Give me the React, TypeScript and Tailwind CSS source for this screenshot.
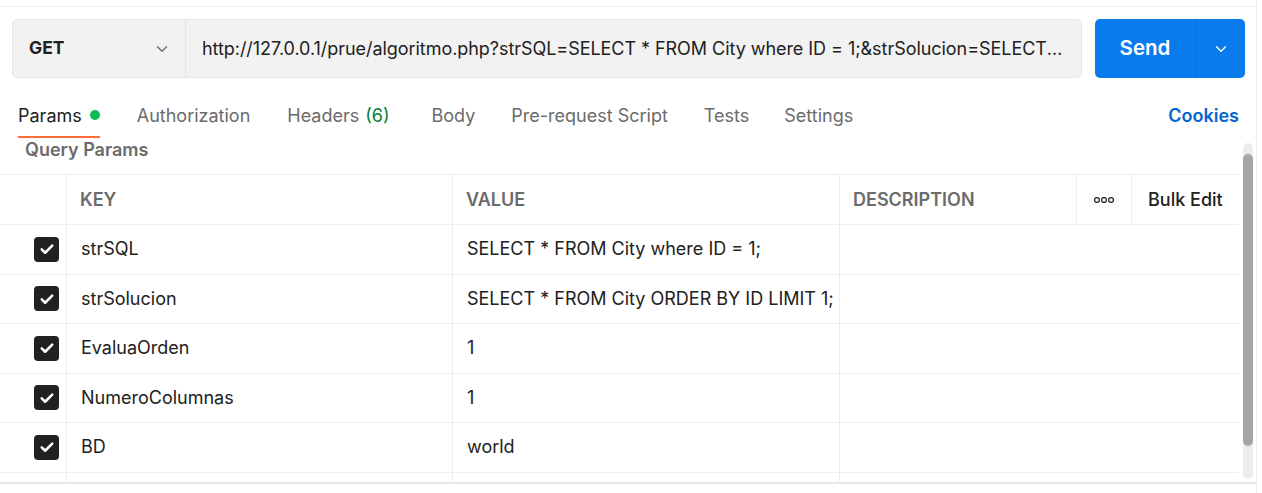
import React from "react";

const rows = [
  { k: "strSQL", v: "SELECT * FROM City where ID = 1;" },
  { k: "strSolucion", v: "SELECT * FROM City ORDER BY ID LIMIT 1;" },
  { k: "EvaluaOrden", v: "1" },
  { k: "NumeroColumnas", v: "1" },
  { k: "BD", v: "world" },
];

function Chevron({ color }: { color: string }) {
  return (
    <svg width="14" height="14" viewBox="0 0 14 14" fill="none">
      <path d="M2.5 4.75L7 9.25l4.5-4.5" stroke={color} strokeWidth="1.4" strokeLinecap="round" strokeLinejoin="round" />
    </svg>
  );
}

function Check() {
  return (
    <div className="w-[25px] h-[25px] rounded-[4px] bg-[#212121] flex items-center justify-center">
      <svg width="18" height="18" viewBox="0 0 24 24" fill="none">
        <path d="M5 12.5l4.5 4.5L19 7.5" stroke="white" strokeWidth="3.4" strokeLinecap="round" strokeLinejoin="round" />
      </svg>
    </div>
  );
}

export default function App() {
  return (
    <div className="w-[1262px] h-[493px] bg-white overflow-hidden text-[18px] text-[#212121]" style={{ fontFamily: "Inter, 'Noto Sans', sans-serif" }}>
      <div className="w-[1257px] h-full border-r border-[#ededed] flex flex-col">
        <div className="h-[7px] border-b border-[#ededed] shrink-0" />
        {/* URL row */}
        <div className="flex mt-[12px] pl-[12px] pr-[11px] h-[59px] shrink-0">
          <div className="flex flex-1 min-w-0 bg-[#f2f2f2] border border-[#e6e6e6] rounded-[5px]">
            <div className="w-[173px] shrink-0 border-r border-[#e3e3e3] flex items-center justify-between pl-[16px] pr-[16px]">
              <span className="font-bold text-[17.5px] text-[#212121]">GET</span>
              <Chevron color="#6b6b6b" />
            </div>
            <div className="flex-1 min-w-0 flex items-center pl-[16px] pr-[17px]">
              <span className="truncate tracking-[-0.05px]">http://127.0.0.1/prue/algoritmo.php?strSQL=SELECT * FROM City where ID = 1;&amp;strSolucion=SELECT * FROM City ORDER BY ID LIMIT 1;&amp;EvaluaOrden=1&amp;NumeroColumnas=1&amp;BD=world</span>
            </div>
          </div>
          <div className="ml-[13px] w-[150px] shrink-0 flex bg-[#097bed] rounded-[5px] text-white">
            <div className="w-[101px] flex items-center justify-center text-[20.5px] font-semibold border-r border-[#0a6fd6]">Send</div>
            <div className="flex-1 flex items-center justify-center">
              <Chevron color="white" />
            </div>
          </div>
        </div>
        {/* Tabs */}
        <div className="flex items-stretch h-[46px] mt-[14px] pl-[18px] pr-[17px] shrink-0">
          <div className="flex items-center border-b-2 border-[#ff6c37] pt-[2px]">
            <span>Params</span>
            <span className="ml-[8px] w-[10px] h-[10px] rounded-full bg-[#0cbb52]" />
          </div>
          <div className="flex items-center ml-[37px] text-[#6b6b6b]">Authorization</div>
          <div className="flex items-center ml-[37px] text-[#6b6b6b]">
            Headers <span className="ml-[6px] text-[#007f31]">(6)</span>
          </div>
          <div className="flex items-center ml-[42px] text-[#6b6b6b]">Body</div>
          <div className="flex items-center ml-[36px] text-[#6b6b6b]">Pre-request Script</div>
          <div className="flex items-center ml-[36px] text-[#6b6b6b]">Tests</div>
          <div className="flex items-center ml-[35px] text-[#6b6b6b]">Settings</div>
          <div className="flex items-center ml-auto text-[#0265d2] font-semibold">Cookies</div>
        </div>
        {/* Content */}
        <div className="flex h-[346px] border-b-2 border-[#e6e6e6] overflow-hidden shrink-0">
          <div className="w-[1239px] shrink-0">
            <div className="h-[36px] pl-[25px] leading-[24px] font-semibold text-[#6b6b6b]">Query Params</div>
            <div className="border-t border-[#ededed]">
              <div className="flex h-[50px] border-b border-[#ededed] font-semibold text-[#6b6b6b]">
                <div className="w-[67px] border-r border-[#ededed]" />
                <div className="w-[386px] border-r border-[#ededed] flex items-center pl-[13px]">KEY</div>
                <div className="w-[387px] border-r border-[#ededed] flex items-center pl-[13px]">VALUE</div>
                <div className="w-[237px] border-r border-[#ededed] flex items-center pl-[13px]">DESCRIPTION</div>
                <div className="w-[55px] border-r border-[#ededed] flex items-center justify-center">
                  <svg width="22" height="8" viewBox="0 0 22 8" fill="none">
                    <circle cx="4" cy="4" r="2.4" stroke="#212121" strokeWidth="1.2" />
                    <circle cx="11" cy="4" r="2.4" stroke="#212121" strokeWidth="1.2" />
                    <circle cx="18" cy="4" r="2.4" stroke="#212121" strokeWidth="1.2" />
                  </svg>
                </div>
                <div className="flex-1 flex items-center pl-[16px] text-[#212121] font-medium">Bulk Edit</div>
              </div>
              {rows.map((r) => (
                <div key={r.k} className="flex h-[49.5px] border-b border-[#ededed]">
                  <div className="w-[67px] border-r border-[#ededed] flex items-center pl-[34px]">
                    <Check />
                  </div>
                  <div className="w-[386px] border-r border-[#ededed] flex items-center pl-[14px] pb-[1px]">{r.k}</div>
                  <div className="w-[387px] border-r border-[#ededed] flex items-center pl-[14px] pb-[1px]">{r.v}</div>
                  <div className="flex-1" />
                </div>
              ))}
              <div className="flex h-[49.5px]">
                <div className="w-[67px] border-r border-[#ededed]" />
                <div className="w-[386px] border-r border-[#ededed]" />
                <div className="w-[387px] border-r border-[#ededed]" />
              </div>
            </div>
          </div>
          <div className="ml-[4px] w-[10px] mt-[5px] h-[336px] rounded-full bg-[#ececec] flex flex-col">
            <div className="mt-[11px] h-[292px] rounded-full bg-[#a6a6a6]" />
          </div>
        </div>
      </div>
    </div>
  );
}
